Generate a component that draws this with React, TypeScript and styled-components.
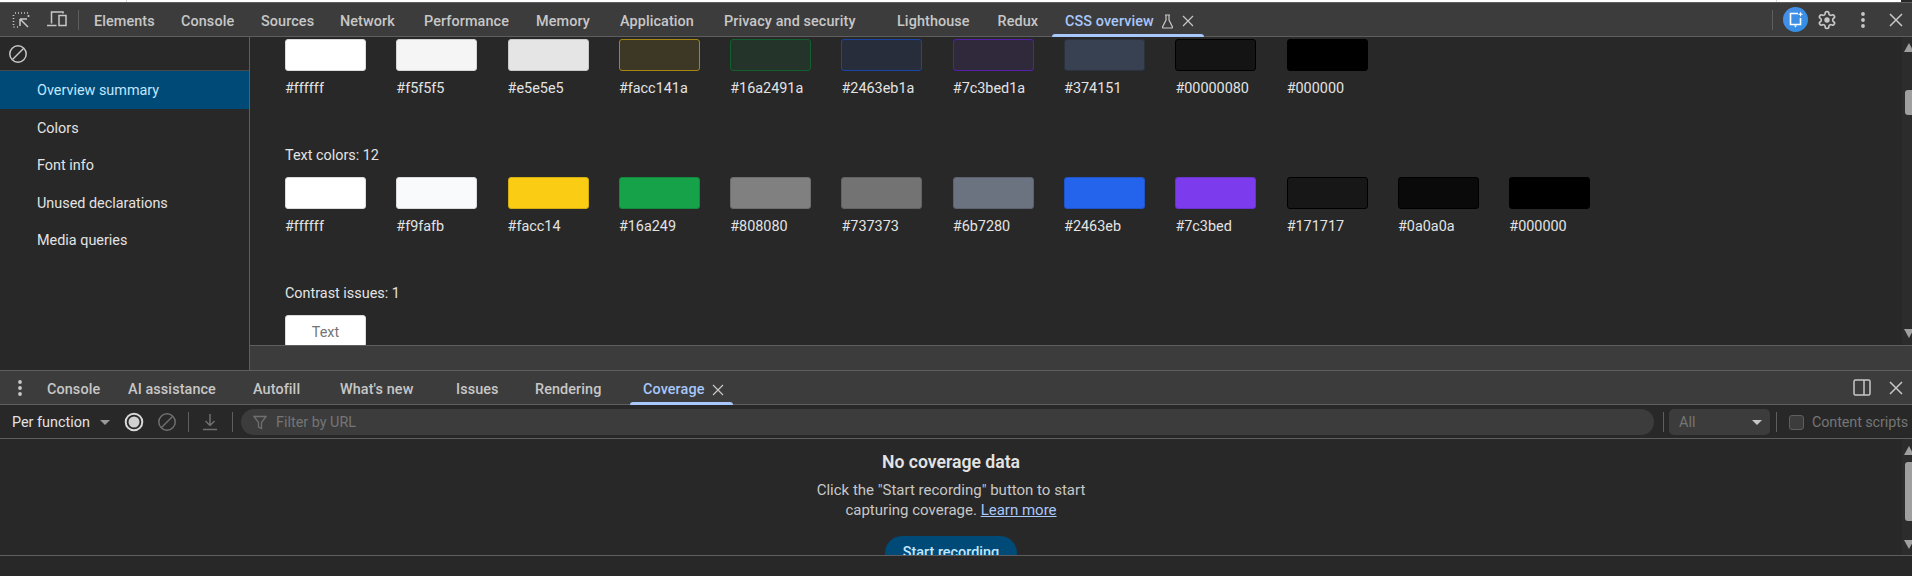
import React from "react";
import styled, { createGlobalStyle } from "styled-components";

const Global = createGlobalStyle`
  html, body { margin: 0; padding: 0; background: #282828; }
  * { box-sizing: border-box; }
`;

const Root = styled.div`
  width: 1912px; height: 576px; overflow: hidden; display: flex; flex-direction: column;
  background: #282828; color: #e3e3e3;
  font-family: Roboto, "Liberation Sans", sans-serif; font-size: 14.4px;
`;
const WindowEdge = styled.div`
  height: 3px; flex: none; border-bottom: 1px solid #5e5e5e;
  background: linear-gradient(to right, #fff 126px, #d8d8d8 126px, #d8d8d8 127px, #fff 127px, #fff 1776px, #d8d8d8 1776px, #d8d8d8 1777px, #fff 1777px);
  display: flex; justify-content: flex-end;
  &::after { content: ""; width: 11px; background: #282828; }
`;
const TabBar = styled.div<{ $h: number }>`
  height: ${p => p.$h}px; flex: none; background: #3c3c3c; border-bottom: 1px solid #5e5e5e;
  display: flex; align-items: stretch;
`;
const Tab = styled.div<{ $w: number; $active?: boolean; $pt?: number }>`
  width: ${p => p.$w}px; flex: none; padding: ${p => p.$pt ?? 3}px 0 0 13px; display: flex; align-items: center; gap: 7px;
  white-space: nowrap; position: relative; color: ${p => (p.$active ? "#a8c7fa" : "#c7c7c7")};
  font-weight: 500; letter-spacing: 0.1px;
  ${p => p.$active && `&::after { content: ""; position: absolute; left: 0; right: 0; bottom: -1px; height: 3px; background: #a8c7fa; border-radius: 3px 3px 0 0; }`}
`;
const IconSlot = styled.div<{ $w: number }>`
  width: ${p => p.$w}px; flex: none; display: flex; align-items: center; justify-content: center; color: #c7c7c7;
`;
const DotsSlot = styled(IconSlot)`padding-left: 6px;`;
const Spacer = styled.div`flex: 1;`;
const Sep = styled.div<{ $l?: number; $r?: number }>`
  width: 1px; height: 20px; flex: none; align-self: center; background: #5e5e5e;
  margin-left: ${p => p.$l ?? 0}px; margin-right: ${p => p.$r ?? 0}px;
`;
const Middle = styled.div`height: 333px; flex: none; display: flex;`;
const Sidebar = styled.div`width: 250px; flex: none; border-right: 1px solid #5e5e5e; display: flex; flex-direction: column;`;
const SideHead = styled.div`
  height: 34px; flex: none; border-bottom: 1px solid #4a4a4a; padding-left: 8px; display: flex; align-items: center; color: #c7c7c7;
`;
const SideItem = styled.div<{ $active?: boolean }>`
  height: 37.5px; flex: none; padding: 2px 0 0 37px; display: flex; align-items: center;
  background: ${p => (p.$active ? "#004a77" : "transparent")};
  color: ${p => (p.$active ? "#c2e7ff" : "#e3e3e3")};
`;
const MainCol = styled.div`flex: 1; min-width: 0; display: flex; flex-direction: column;`;
const Scroller = styled.div`height: 308px; flex: none; display: flex; overflow: hidden;`;
const Overview = styled.div`flex: 1; min-width: 0; padding: 2px 0 0 35px; overflow: hidden;`;
const Footer = styled.div`height: 25px; flex: none; background: #3c3c3c; border-top: 1px solid #5e5e5e;`;
const Heading = styled.div`height: 18px; line-height: 18px; margin: 48.5px 0 12.5px; color: #e3e3e3;`;
const Swatches = styled.div`display: flex; gap: 30.3px;`;
const SwatchCell = styled.div`width: 81px; flex: none;`;
const SwatchBox = styled.div<{ $bg: string; $bd: string }>`
  height: 32px; background: ${p => p.$bg}; border: 1px solid ${p => p.$bd}; border-radius: 3px;
  display: flex; align-items: center; justify-content: center;
  color: #757575; font-size: 14.4px; padding-top: 2px;
`;
const SwatchLabel = styled.div`height: 18px; line-height: 18px; margin-top: 9px; white-space: nowrap; color: #e3e3e3;`;
const ScrollTrack = styled.div`
  width: 10px; flex: none; background: #2c2c2c; position: relative;
`;
const ScrollThumb = styled.div<{ $top: number; $h: number }>`
  position: absolute; right: 0; top: ${p => p.$top}px; height: ${p => p.$h}px; width: 7px; background: #9f9f9f; border-radius: 3px 0 0 3px;
`;
const ScrollArrow = styled.div<{ $top: number; $down?: boolean }>`
  position: absolute; right: -2px; top: ${p => p.$top}px; width: 0; height: 0;
  border-left: 5px solid transparent; border-right: 5px solid transparent;
  ${p => (p.$down ? "border-top: 9px solid #9f9f9f;" : "border-bottom: 9px solid #9f9f9f;")}
`;
const FilterBar = styled.div`
  height: 33px; flex: none; display: flex; align-items: stretch; padding: 4px 0 3px 12px;
`;
const BarRule = styled.div`height: 1px; flex: none; background: #5e5e5e;`;
const PerFunction = styled.div`
  width: 106px; flex: none; display: flex; align-items: center; gap: 10px; color: #e3e3e3; white-space: nowrap;
`;
const Caret = styled.span<{ $c?: string }>`
  width: 0; height: 0; border-left: 5px solid transparent; border-right: 5px solid transparent;
  border-top: 5px solid ${p => p.$c ?? "#9a9a9a"}; flex: none;
`;
const FilterPill = styled.div`
  flex: 1; min-width: 0; background: #3c3c3c; border-radius: 13px; display: flex; align-items: center; color: #757575;
  padding-left: 12px; gap: 9px;
`;
const SelectBox = styled.div`
  width: 101px; flex: none; background: #3c3c3c; border-radius: 5px; display: flex; align-items: center; justify-content: space-between;
  padding: 0 8px 0 10px; color: #757575;
`;
const CheckRow = styled.div`
  width: 129px; flex: none; display: flex; align-items: center; gap: 8px; padding-left: 6px; color: #757575; white-space: nowrap;
  letter-spacing: -0.1px;
`;
const CheckBox = styled.span`
  width: 15px; height: 15px; flex: none; border: 1.5px solid #5e5e5e; border-radius: 3px; background: #3c3c3c;
`;
const CoveragePane = styled.div`height: 117px; flex: none; display: flex; overflow: hidden; border-bottom: 1px solid #5e5e5e;`;
const Empty = styled.div`flex: 1; min-width: 0; display: flex; flex-direction: column; align-items: center; padding: 12px 0 0 0; overflow: hidden;`;
const EmptyTitle = styled.div`font-size: 17.6px; font-weight: 600; height: 22px; line-height: 22px; color: #e3e3e3;`;
const EmptyText = styled.div`margin-top: 7px; line-height: 20px; font-size: 15px; text-align: center; color: #c7c7c7;`;
const LearnLink = styled.a`color: #a8c7fa; text-decoration: underline;`;
const PrimaryButton = styled.div`
  flex: none; width: 132px; height: 34px; margin-top: 16px; border-radius: 17px; background: #004a77; color: #c2e7ff;
  display: flex; justify-content: center; padding-top: 8px; font-weight: 500;
`;
const Bottom = styled.div`flex: 1; background: #282828;`;

const Ico = ({ w, h, children, c = "currentColor" }: { w: number; h: number; c?: string; children: React.ReactNode }) => (
  <svg width={w} height={h} viewBox={`0 0 ${w} ${h}`} fill="none" stroke={c} strokeWidth="1.5" style={{ display: "block", flex: "none" }}>{children}</svg>
);
const Block = ({ c = "#c7c7c7" }: { c?: string }) => (
  <Ico w={20} h={20} c={c}><circle cx="10" cy="10" r="8.2" /><path d="M4.5 15.5 15.5 4.5" /></Ico>
);
const Close = ({ s = 18, t = 1.5 }: { s?: number; t?: number }) => (
  <svg width={s} height={s} viewBox={`0 0 ${s} ${s}`} fill="none" stroke="#c7c7c7" strokeWidth={t} style={{ display: "block", flex: "none" }}>
    <path d={`M2 2 ${s - 2} ${s - 2}M${s - 2} 2 2 ${s - 2}`} />
  </svg>
);
const Dots = () => (
  <svg width="4" height="16" viewBox="0 0 4 16" fill="#c7c7c7" style={{ display: "block" }}><circle cx="2" cy="2" r="1.9" /><circle cx="2" cy="8" r="1.9" /><circle cx="2" cy="14" r="1.9" /></svg>
);

const topTabs: [string, number][] = [["Elements", 87], ["Console", 80], ["Sources", 79], ["Network", 84], ["Performance", 112], ["Memory", 84], ["Application", 104], ["Privacy and security", 173], ["Lighthouse", 100.5], ["Redux", 67.5]];
const botTabs: [string, number][] = [["Console", 81], ["AI assistance", 125], ["Autofill", 87], ["What's new", 116], ["Issues", 79], ["Rendering", 108]];
const row1 = [
  ["#ffffff", "#dcdcdc"], ["#f5f5f5", "#d5d5d5"], ["#e5e5e5", "#c8c8c8"],
  ["#facc141a", "#a58610"], ["#16a2491a", "#125f2e"], ["#2463eb1a", "#1a45a5"],
  ["#7c3bed1a", "#5420ab"], ["#374151", "#2b323e"], ["#00000080", "#000000"], ["#000000", "#000000"],
];
const row2 = [
  ["#ffffff", "#dcdcdc"], ["#f9fafb", "#d9dadb"], ["#facc14", "#d4ad10"], ["#16a249", "#128a3e"],
  ["#808080", "#6d6d6d"], ["#737373", "#626262"], ["#6b7280", "#5b616d"], ["#2463eb", "#1f54c8"],
  ["#7c3bed", "#6932ca"], ["#171717", "#000000"], ["#0a0a0a", "#000000"], ["#000000", "#000000"],
];
const Swatch = ({ v }: { v: string[] }) => (
  <SwatchCell><SwatchBox $bg={v[0]} $bd={v[1]} /><SwatchLabel>{v[0]}</SwatchLabel></SwatchCell>
);

export default function App() {
  return (
    <Root>
      <Global />
      <WindowEdge />
      <TabBar $h={34}>
        <IconSlot $w={41}>
          <Ico w={20} h={20}>
            <path d="M4 3h1M7 3h1M10 3h1M13 3h1M16 3h1M2.5 5v1M2.5 8v1M2.5 11v1M2.5 14v1M2.5 17h1M6 17h1M17.5 5v2" strokeWidth="1.6" />
            <path d="M9 9h7M9 9v7M9 9l8 8" />
          </Ico>
        </IconSlot>
        <IconSlot $w={31}>
          <Ico w={21} h={17}>
            <path d="M17 2.5V1H5.5v11.5M1 14.5h9.5" />
            <rect x="13" y="4.5" width="7" height="10" />
          </Ico>
        </IconSlot>
        <Sep $l={6} $r={2} />
        {topTabs.map(([t, w]) => <Tab key={t} $w={w}>{t}</Tab>)}
        <Tab $w={152} $active>
          CSS overview
          <Ico w={13} h={15} c="#c7c7c7"><path d="M4 1h5M5 1v5L1.5 13a.8.8 0 0 0 .7 1h8.6a.8.8 0 0 0 .7-1L8 6V1" strokeWidth="1.2" /></Ico>
          <Close s={14} t={1.2} />
        </Tab>
        <Spacer />
        <Sep $r={10} />
        <svg width="25" height="25" viewBox="0 0 25 25" style={{ alignSelf: "center", flex: "none", display: "block" }}>
          <defs><linearGradient id="ai" x1="0" y1="0" x2="1" y2="1"><stop offset="0" stopColor="#4a90ea" /><stop offset="1" stopColor="#2f8fe0" /></linearGradient></defs>
          <circle cx="12.5" cy="12.5" r="12.5" fill="url(#ai)" />
          <path d="M15 6.5H7.5v11h10V11" fill="none" stroke="#fff" strokeWidth="1.6" />
          <path d="M11 18.5h3l-1.5 2z" fill="#fff" />
          <path d="M17.5 4.5l.7 2 2 .7-2 .7-.7 2-.7-2-2-.7 2-.7z" fill="#fff" />
        </svg>
        <IconSlot $w={38}>
          <svg width="20" height="20" viewBox="0 0 24 24" fill="none" stroke="#c7c7c7" strokeWidth="2" style={{ display: "block" }}>
            <path d="M12.22 2h-.44a2 2 0 0 0-2 2v.18a2 2 0 0 1-1 1.73l-.43.25a2 2 0 0 1-2 0l-.15-.08a2 2 0 0 0-2.73.73l-.22.38a2 2 0 0 0 .73 2.73l.15.1a2 2 0 0 1 1 1.72v.51a2 2 0 0 1-1 1.74l-.15.09a2 2 0 0 0-.73 2.73l.22.38a2 2 0 0 0 2.73.73l.15-.08a2 2 0 0 1 2 0l.43.25a2 2 0 0 1 1 1.73V20a2 2 0 0 0 2 2h.44a2 2 0 0 0 2-2v-.18a2 2 0 0 1 1-1.73l.43-.25a2 2 0 0 1 2 0l.15.08a2 2 0 0 0 2.73-.73l.22-.39a2 2 0 0 0-.73-2.73l-.15-.08a2 2 0 0 1-1-1.74v-.5a2 2 0 0 1 1-1.74l.15-.09a2 2 0 0 0 .73-2.73l-.22-.38a2 2 0 0 0-2.73-.73l-.15.08a2 2 0 0 1-2 0l-.43-.25a2 2 0 0 1-1-1.73V4a2 2 0 0 0-2-2z" />
            <circle cx="12" cy="12" r="3.2" fill="#c7c7c7" stroke="none" />
          </svg>
        </IconSlot>
        <IconSlot $w={34}><Dots /></IconSlot>
        <IconSlot $w={32}><Close s={16} /></IconSlot>
      </TabBar>
      <Middle>
        <Sidebar>
          <SideHead><Block /></SideHead>
          <SideItem $active>Overview summary</SideItem>
          <SideItem>Colors</SideItem>
          <SideItem>Font info</SideItem>
          <SideItem>Unused declarations</SideItem>
          <SideItem>Media queries</SideItem>
        </Sidebar>
        <MainCol>
          <Scroller>
            <Overview>
              <Swatches>{row1.map(v => <Swatch key={v[0]} v={v} />)}</Swatches>
              <Heading>Text colors: 12</Heading>
              <Swatches>{row2.map(v => <Swatch key={v[0]} v={v} />)}</Swatches>
              <Heading>Contrast issues: 1</Heading>
              <Swatches>
                <SwatchCell><SwatchBox $bg="#ffffff" $bd="#dcdcdc">Text</SwatchBox></SwatchCell>
              </Swatches>
            </Overview>
            <ScrollTrack>
              <ScrollArrow $top={6} />
              <ScrollThumb $top={53} $h={25} />
              <ScrollArrow $top={292} $down />
            </ScrollTrack>
          </Scroller>
          <Footer />
        </MainCol>
      </Middle>
      <BarRule />
      <TabBar $h={34}>
        <DotsSlot $w={34}><Dots /></DotsSlot>
        {botTabs.map(([t, w]) => <Tab key={t} $w={w} $pt={4}>{t}</Tab>)}
        <Tab $w={103} $pt={4} $active>Coverage<Close s={14} t={1.2} /></Tab>
        <Spacer />
        <IconSlot $w={36}>
          <Ico w={18} h={17}><rect x="1" y="1" width="16" height="15" rx="1.5" /><path d="M11 1v15" /></Ico>
        </IconSlot>
        <IconSlot $w={32}><Close s={16} /></IconSlot>
      </TabBar>
      <FilterBar>
        <PerFunction>Per function<Caret /></PerFunction>
        <IconSlot $w={32}>
          <Ico w={20} h={20} c="#d8d8d8"><circle cx="10" cy="10" r="8.3" strokeWidth="2" /><circle cx="10" cy="10" r="5.5" fill="#d0d0d0" stroke="none" /></Ico>
        </IconSlot>
        <IconSlot $w={33}><Block c="#6f6f6f" /></IconSlot>
        <Sep $l={5} $r={5} />
        <IconSlot $w={32}>
          <Ico w={16} h={18} c="#6f6f6f"><path d="M8 1v11M3.5 8 8 12.5 12.5 8M1 16.5h14" /></Ico>
        </IconSlot>
        <Sep $l={6} $r={8} />
        <FilterPill>
          <Ico w={14} h={15} c="#6f6f6f"><path d="M1 1.5h12L8.5 7.5v6l-3-1.5V7.5z" strokeWidth="1.3" /></Ico>
          Filter by URL
        </FilterPill>
        <Sep $l={9} $r={5} />
        <SelectBox>All<Caret $c="#c7c7c7" /></SelectBox>
        <Sep $l={6} $r={6} />
        <CheckRow><CheckBox />Content scripts</CheckRow>
      </FilterBar>
      <BarRule />
      <CoveragePane>
        <Empty>
          <EmptyTitle>No coverage data</EmptyTitle>
          <EmptyText>Click the "Start recording" button to start<br />capturing coverage. <LearnLink>Learn more</LearnLink></EmptyText>
          <PrimaryButton>Start recording</PrimaryButton>
        </Empty>
        <ScrollTrack>
          <ScrollArrow $top={7} />
          <ScrollThumb $top={23} $h={59} />
          <ScrollArrow $top={101} $down />
        </ScrollTrack>
      </CoveragePane>
      <Bottom />
    </Root>
  );
}
